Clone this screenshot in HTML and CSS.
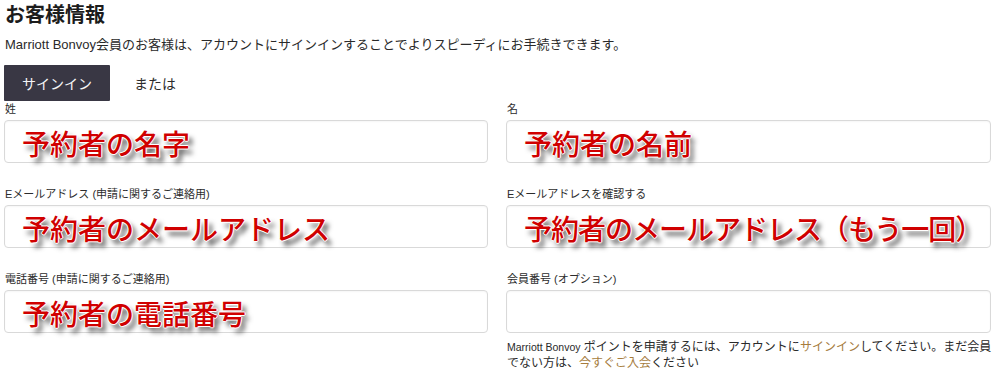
FILE: index.html
```html
<!DOCTYPE html>
<html lang="ja">
<head>
<meta charset="utf-8">
<title>お客様情報</title>
<link rel="stylesheet" href="styles.css">
</head>
<body>
<div class="page">
  <h1 class="title">お客様情報</h1>
  <p class="lead">Marriott Bonvoy会員のお客様は、アカウントにサインインすることでよりスピーディにお手続きできます。</p>
  <div class="signin-row">
    <button class="signin-btn" type="button">サインイン</button>
    <span class="or">または</span>
  </div>
  <div class="form-grid">
    <div class="field">
      <div class="label">姓</div>
      <div class="input"><span class="note">予約者の名字</span></div>
    </div>
    <div class="field">
      <div class="label">名</div>
      <div class="input"><span class="note">予約者の名前</span></div>
    </div>
    <div class="field">
      <div class="label">Eメールアドレス (申請に関するご連絡用)</div>
      <div class="input"><span class="note">予約者のメールアドレス</span></div>
    </div>
    <div class="field">
      <div class="label">Eメールアドレスを確認する</div>
      <div class="input"><span class="note note-long">予約者のメールアドレス（もう一回）</span></div>
    </div>
    <div class="field">
      <div class="label">電話番号 (申請に関するご連絡用)</div>
      <div class="input"><span class="note">予約者の電話番号</span></div>
    </div>
    <div class="field">
      <div class="label">会員番号 (オプション)</div>
      <div class="input"></div>
      <p class="help"><span class="brand">Marriott Bonvoy</span> ポイントを申請するには、アカウントに<a class="link" href="#">サインイン</a>してください。まだ会員<br>でない方は、<a class="link" href="#">今すぐご入会</a>ください</p>
    </div>
  </div>
</div>
</body>
</html>
```
FILE: styles.css
```css
html, body {
  margin: 0;
  padding: 0;
  background: #ffffff;
}
body {
  font-family: "Liberation Sans", "Noto Sans CJK JP", sans-serif;
  color: #2a2a2a;
}
.page {
  padding: 0 5px 0 4px;
  width: 987px;
}
.title {
  margin: 0;
  font-size: 20px;
  line-height: 30px;
  font-weight: 700;
  color: #1c1c1c;
  padding-left: 1px;
}
.lead {
  margin: 5px 0 0;
  font-size: 13px;
  line-height: 20px;
  color: #2a2a2a;
  padding-left: 1px;
}
.signin-row {
  margin-top: 10px;
  display: flex;
  align-items: center;
  gap: 24px;
}
.signin-btn {
  width: 106px;
  height: 36px;
  border: 0;
  margin: 0;
  padding: 0;
  background: #393744;
  color: #f4f4f6;
  font-family: "Noto Sans CJK JP", sans-serif;
  font-size: 14px;
  border-radius: 1px;
}
.or {
  font-family: "Noto Sans CJK JP", sans-serif;
  font-size: 14px;
  color: #2c2c2c;
}
.form-grid {
  display: grid;
  grid-template-columns: 484px 485px;
  column-gap: 18px;
  row-gap: 23px;
}
.label {
  font-size: 11px;
  line-height: 16px;
  margin-bottom: 3px;
  color: #2c2c2c;
  padding-left: 1px;
  white-space: nowrap;
}
.input {
  box-sizing: border-box;
  height: 43px;
  border: 1px solid #d9d9d9;
  border-radius: 4px;
  background: #ffffff;
  box-shadow: inset 0 1px 2px rgba(0, 0, 0, 0.04);
  display: flex;
  align-items: center;
  padding-left: 17px;
  overflow: visible;
}
.note {
  font-family: "Noto Sans CJK JP", sans-serif;
  font-size: 28px;
  font-weight: 500;
  line-height: 1;
  color: #d00000;
  white-space: nowrap;
  text-shadow:
    -1px 0 0 #ffffff, 1px 0 0 #ffffff, 0 -1px 0 #ffffff, 0 1px 0 #ffffff,
    4px 5px 5px rgba(0, 0, 0, 0.7);
  margin-top: 2px;
}
.note-long {
  letter-spacing: -1px;
}
.help {
  margin: 6px 0 0;
  font-size: 12px;
  line-height: 16px;
  color: #2a2a2a;
  white-space: nowrap;
  padding-left: 1px;
}
.brand {
  font-size: 10.5px;
}
.link {
  color: #a67c3d;
  text-decoration: none;
}
```
